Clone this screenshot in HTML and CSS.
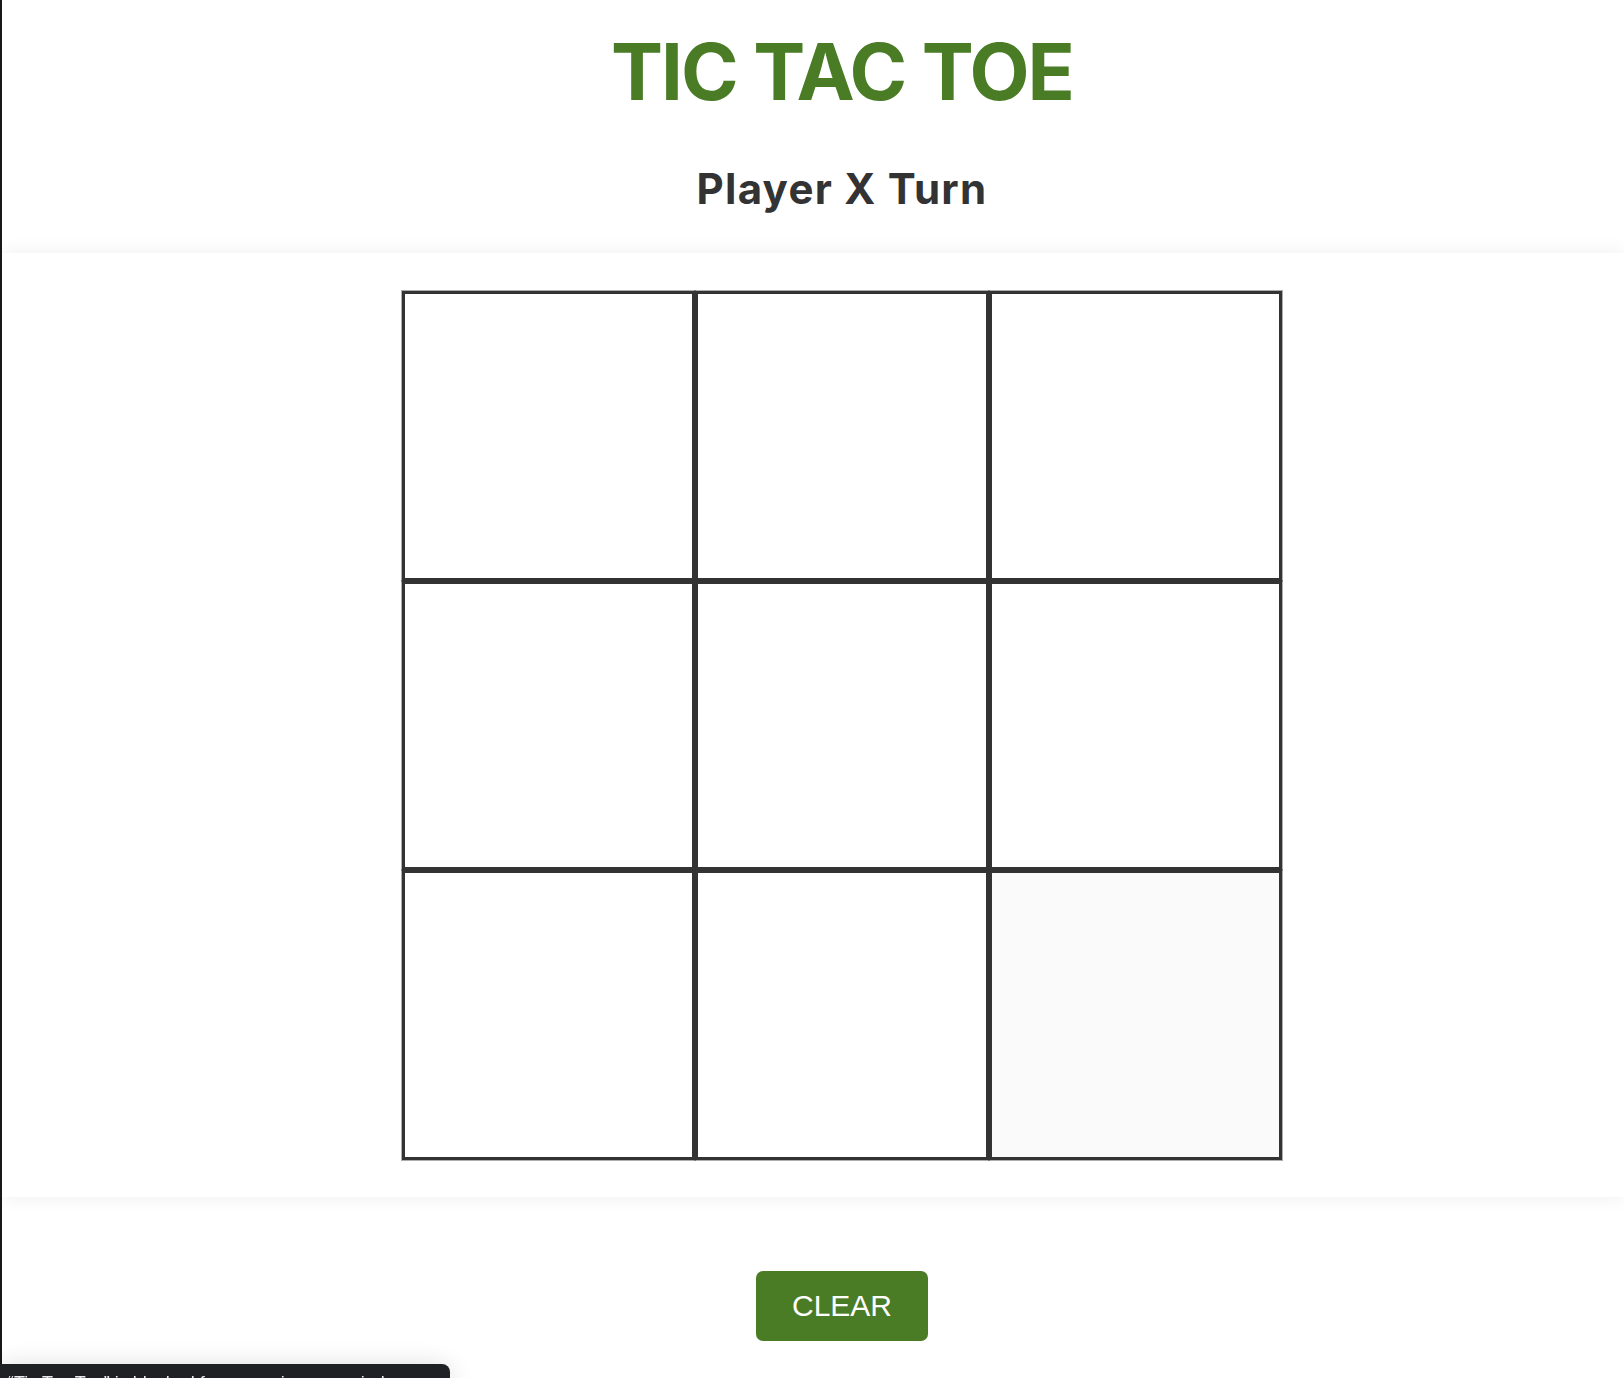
FILE: index.html
```html
<!DOCTYPE html>
<html lang="en">
<head>
<meta charset="utf-8">
<title>Tic Tac Toe</title>
<link rel="stylesheet" href="styles.css">
</head>
<body>
  <header class="header">
    <h1 class="title">TIC TAC TOE</h1>
    <h2 class="status">Player X Turn</h2>
  </header>
  <main class="board-section">
    <div class="board">
      <div class="cell"></div>
      <div class="cell"></div>
      <div class="cell"></div>
      <div class="cell"></div>
      <div class="cell"></div>
      <div class="cell"></div>
      <div class="cell"></div>
      <div class="cell"></div>
      <div class="cell cell-hover"></div>
    </div>
  </main>
  <footer class="footer">
    <button class="clear-btn" type="button">CLEAR</button>
  </footer>
  <div class="status-tip">“Tic Tac Toe” is blocked from opening new windows</div>
</body>
</html>
```
FILE: styles.css
```css
html, body {
  margin: 0;
  padding: 0;
  height: 100%;
}
body {
  background: #ffffff;
  border-left: 2px solid #16181a;
  overflow: hidden;
  font-family: "Inter", "Liberation Sans", sans-serif;
}
.header {
  padding: 33px 0 43px 58px;
  text-align: center;
}
.title {
  margin: 0;
  font-size: 78px;
  line-height: 78px;
  font-weight: 700;
  color: #4a7c25;
  letter-spacing: -0.025em;
}
.status {
  margin: 57px 0 0;
  font-size: 42px;
  line-height: 42px;
  font-weight: 700;
  color: #333333;
  letter-spacing: 0.03em;
}
.board-section {
  position: relative;
  height: 944px;
  box-sizing: border-box;
  padding: 38px 0 37px 58px;
  background: #ffffff;
  box-shadow: 0 0 18px rgba(0, 0, 0, 0.07);
  display: flex;
  justify-content: center;
}
.board {
  width: 880px;
  height: 869px;
  display: grid;
  grid-template-columns: repeat(3, 1fr);
  grid-template-rows: repeat(3, 1fr);
}
.cell {
  border: 3px solid #333333;
  background: #ffffff;
  box-shadow: 0 0 0 1px rgba(51, 51, 51, 0.4);
}
.cell-hover {
  background: #fafafa;
}
.footer {
  padding: 74px 0 0 58px;
  display: flex;
  justify-content: center;
}
.clear-btn {
  width: 172px;
  height: 70px;
  border: none;
  border-radius: 7px;
  background: #4a7c25;
  color: #ffffff;
  font-family: "Liberation Sans", Arial, sans-serif;
  font-size: 30px;
  padding: 0;
}
.status-tip {
  position: fixed;
  left: 0;
  top: 1364px;
  width: 450px;
  height: 30px;
  box-sizing: border-box;
  padding: 9px 0 0 8px;
  background: #202124;
  color: #e8eaed;
  border-top-right-radius: 8px;
  box-shadow: 0 0 24px rgba(0, 0, 0, 0.12);
  font-family: "Liberation Sans", Arial, sans-serif;
  font-size: 18px;
  line-height: 20px;
  white-space: nowrap;
  overflow: hidden;
}
```
